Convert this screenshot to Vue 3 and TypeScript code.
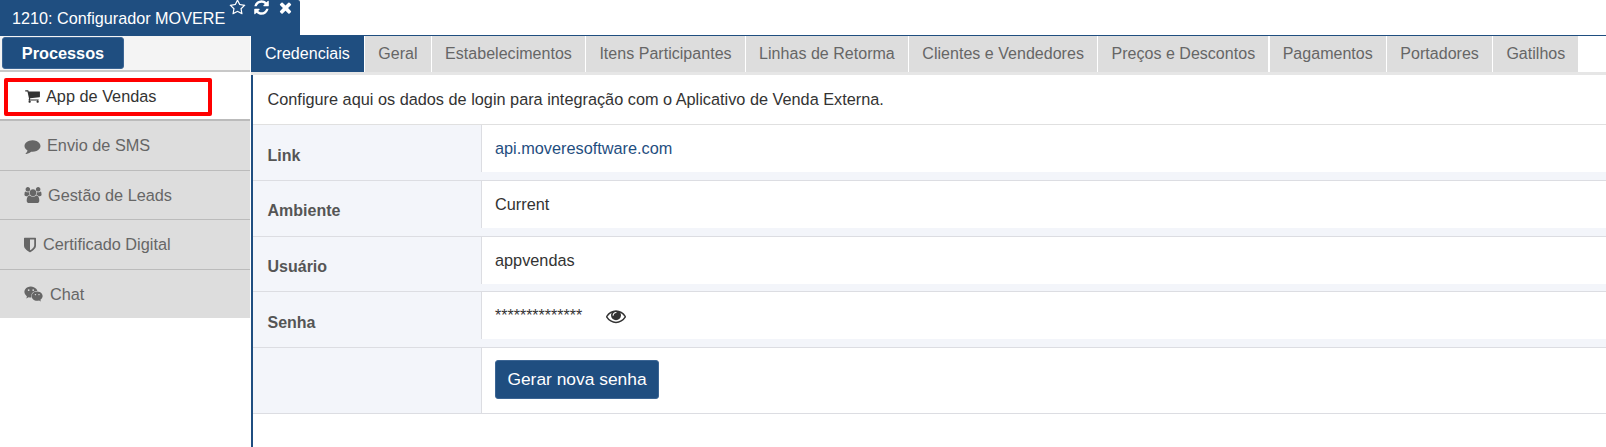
<script setup lang="ts">
const tabs = [
  'Credenciais',
  'Geral',
  'Estabelecimentos',
  'Itens Participantes',
  'Linhas de Retorma',
  'Clientes e Vendedores',
  'Preços e Descontos',
  'Pagamentos',
  'Portadores',
  'Gatilhos',
]

const icons: Record<string, { box: string; d: string }> = {
  comment: {
    box: '0 0 1792 1792',
    d: 'M1792 896q0 174-120 321.5t-326 233-450 85.5q-70 0-145-8-198 175-460 242-49 14-114 22-17 2-30.5-9t-17.5-29v-1q-3-4-.5-12t2-10 4.5-9.5l6-9 7-8.5 8-9q7-8 31-34.5t34.5-38 31-39.5 32.5-51 27-59 26-76q-157-89-247.5-220t-90.5-281q0-130 71-248.5t191-204.5 286-136.5 348-50.5q244 0 450 85.5t326 233 120 321.5z',
  },
  users: {
    box: '0 0 1920 1792',
    d: 'M593 896q-162 5-265 128h-134q-82 0-138-40.5t-56-118.5q0-353 124-353 6 0 43.5 21t97.5 42.5 119 21.5q67 0 133-23-5 37-5 66 0 139 81 256zm1071 637q0 120-73 189.5t-194 69.5h-874q-121 0-194-69.5t-73-189.5q0-53 3.5-103.5t14-109 26.5-108.5 43-97.5 62-81 85.5-53.5 111.5-20q10 0 43 21.5t73 48 107 48 135 21.5 135-21.5 107-48 73-48 43-21.5q61 0 111.5 20t85.5 53.5 62 81 43 97.5 26.5 108.5 14 109 3.5 103.5zm-1024-1277q0 106-75 181t-181 75-181-75-75-181 75-181 181-75 181 75 75 181zm704 384q0 159-112.5 271.5t-271.5 112.5-271.5-112.5-112.5-271.5 112.5-271.5 271.5-112.5 271.5 112.5 112.5 271.5zm576 225q0 78-56 118.5t-138 40.5h-134q-103-123-265-128 81-117 81-256 0-29-5-66 66 23 133 23 59 0 119-21.5t97.5-42.5 43.5-21q124 0 124 353zm-128-609q0 106-75 181t-181 75-181-75-75-181 75-181 181-75 181 75 75 181z',
  },
  shield: {
    box: '256 128 1280 1536',
    d: 'M1344 960v-640h-448v1137q119-63 213-137 235-184 235-360zm192-768v768q0 86-33.5 170.5t-83 150-118 127.5-126.5 103-121 77.5-89.5 49.5-42.5 20q-12 6-26 6t-26-6q-16-7-42.5-20t-89.5-49.5-121-77.5-126.5-103-118-127.5-83-150-33.5-170.5v-768q0-26 19-45t45-19h1152q26 0 45 19t19 45z',
  },
  wechat: {
    box: '0 0 2048 1792',
    d: 'M580 461q0-41-25-66t-66-25q-43 0-76 25.5t-33 65.5q0 39 33 64.5t76 25.5q41 0 66-24.5t25-65.5zm743 507q0-28-25.5-50t-65.5-22q-27 0-49.5 22.5t-22.5 49.5q0 28 22.5 50.5t49.5 22.5q40 0 65.5-22t25.5-51zm-236-507q0-41-24.5-66t-65.5-25q-43 0-76 25.5t-33 65.5q0 39 33 64.5t76 25.5q41 0 65.5-24.5t24.5-65.5zm635 507q0-28-26-50t-65-22q-27 0-49.5 22.5t-22.5 49.5q0 28 22.5 50.5t49.5 22.5q39 0 65-22t26-51zm-266-397q-31-4-70-4-169 0-311 77t-223.5 208.5-81.5 287.5q0 78 23 152-35 3-68 3-26 0-50-1.5t-55-6.5-44.5-7-54.5-10.5-50-10.5l-253 127 72-218q-290-203-290-490 0-169 97.5-311t264-223.5 363.5-81.5q176 0 332.5 66t262 182.5 136.5 260.5zm592 561q0 117-68.5 223.5t-185.5 193.5l55 181-199-109q-150 37-218 37-169 0-311-70.5t-223.5-191.5-81.5-264 81.5-264 223.5-191.5 311-70.5q161 0 303 70.5t227.5 191.5 85.5 264z',
  },
}

const menu = [
  { label: 'Envio de SMS', icon: 'comment', w: 17, gap: 6 },
  { label: 'Gestão de Leads', icon: 'users', w: 18, gap: 6 },
  { label: 'Certificado Digital', icon: 'shield', w: 12, gap: 7 },
  { label: 'Chat', icon: 'wechat', w: 19, gap: 7 },
]

const rows = [
  { label: 'Link', value: 'api.moveresoftware.com', link: true },
  { label: 'Ambiente', value: 'Current' },
  { label: 'Usuário', value: 'appvendas' },
]
</script>

<template>
  <div class="page">
    <header class="top">
      <div class="title">
        <span class="title-text">1210: Configurador MOVERE</span>
        <svg class="t-ico star" viewBox="0 0 1792 1792"><path d="M1201 1004l306-297-422-62-189-382-189 382-422 62 306 297-73 421 378-199 377 199zm527-357q0 22-26 48l-363 354 86 500q1 7 1 20 0 50-41 50-19 0-40-12l-449-236-449 236q-22 12-40 12-21 0-31.5-14.5t-10.5-35.5q0-6 2-20l86-500-364-354q-25-27-25-48 0-37 56-46l502-73 225-455q19-41 49-41t49 41l225 455 502 73q56 9 56 46z" /></svg>
        <svg class="t-ico" viewBox="0 0 1792 1792"><path d="M1639 1056q0 5-1 7-64 268-268 434.5t-478 166.5q-146 0-282.5-55t-243.5-157l-129 129q-19 19-45 19t-45-19-19-45v-448q0-26 19-45t45-19h448q26 0 45 19t19 45-19 45l-137 137q71 66 161 102t187 36q134 0 250-65t186-179q11-17 53-117 8-23 30-23h192q13 0 22.5 9.5t9.5 22.5zm25-800v448q0 26-19 45t-45 19h-448q-26 0-45-19t-19-45 19-45l138-138q-148-137-349-137-134 0-250 65t-186 179q-11 17-53 117-8 23-30 23h-199q-13 0-22.5-9.5t-9.5-22.5v-7q65-268 270-434.5t480-166.5q146 0 284 55.5t245 156.5l130-129q19-19 45-19t45 19 19 45z" /></svg>
        <svg class="t-ico" viewBox="0 0 1792 1792"><path d="M1490 1322q0 40-28 68l-136 136q-28 28-68 28t-68-28l-294-294-294 294q-28 28-68 28t-68-28l-136-136q-28-28-28-68t28-68l294-294-294-294q-28-28-28-68t28-68l136-136q28-28 68-28t68 28l294 294 294-294q28-28 68-28t68 28l136 136q28 28 28 68t-28 68l-294 294 294 294q28 28 28 68z" /></svg>
      </div>
    </header>

    <div class="body">
      <aside class="side">
        <div class="side-bar">
          <button class="proc">Processos</button>
        </div>
        <div class="item active">
          <svg class="m-ico cart" viewBox="0 0 1792 1792"><path d="M704 1536q0 52-38 90t-90 38-90-38-38-90 38-90 90-38 90 38 38 90zm896 0q0 52-38 90t-90 38-90-38-38-90 38-90 90-38 90 38 38 90zm128-1088v512q0 24-16.5 42.5t-40.5 21.5l-1044 122q13 60 13 70 0 16-24 64h920q26 0 45 19t19 45-19 45-45 19h-1024q-26 0-45-19t-19-45q0-11 8-31.5t16-36 21.5-40 15.5-29.5l-177-823h-204q-26 0-45-19t-19-45 19-45 45-19h256q16 0 28.5 6.5t19.5 15.5 13 24.5 8 26 5.5 29.5 4.5 26h1201q26 0 45 19t19 45z" /></svg>
          <span>App de Vendas</span>
          <div class="mark"></div>
        </div>
        <div v-for="m in menu" :key="m.label" class="item">
          <svg
            class="m-ico"
            :viewBox="icons[m.icon].box"
            :style="{ width: m.w + 'px', marginRight: m.gap + 'px' }"
          >
            <path :d="icons[m.icon].d" />
          </svg>
          <span>{{ m.label }}</span>
        </div>
      </aside>

      <main class="main">
        <nav class="tabs">
          <div v-for="(t, i) in tabs" :key="t" class="tab" :class="{ on: i === 0 }">{{ t }}</div>
        </nav>
        <div class="panel">
          <p class="intro">Configure aqui os dados de login para integração com o Aplicativo de Venda Externa.</p>
          <div v-for="r in rows" :key="r.label" class="row">
            <div class="lbl">{{ r.label }}</div>
            <div class="val" :class="{ link: r.link }">{{ r.value }}</div>
          </div>
          <div class="row">
            <div class="lbl">Senha</div>
            <div class="val pass">
              <span class="stars">**************</span>
              <svg class="eye" viewBox="0 0 1792 1792"><path d="M1664 960q-152-236-381-353 61 104 61 225 0 185-131.5 316.5t-316.5 131.5-316.5-131.5-131.5-316.5q0-121 61-225-229 117-381 353 133 205 333.5 326.5t434.5 121.5 434.5-121.5 333.5-326.5zm-720-384q0-20-14-34t-34-14q-125 0-214.5 89.5t-89.5 214.5q0 20 14 34t34 14 34-14 14-34q0-86 61-147t147-61q20 0 34-14t14-34zm848 384q0 34-20 69-140 230-376.5 368.5t-499.5 138.5-499.5-139-376.5-368q-20-35-20-69t20-69q140-229 376.5-368t499.5-139 499.5 139 376.5 368q20 35 20 69z" /></svg>
            </div>
          </div>
          <div class="row last">
            <div class="lbl"></div>
            <div class="val"><button class="gen">Gerar nova senha</button></div>
          </div>
        </div>
      </main>
    </div>
  </div>
</template>

<style>
html,
body {
  background: #fff;
  overflow: hidden;
}
</style>

<style scoped>
.page {
  width: 1606px;
  height: 447px;
  display: flex;
  flex-direction: column;
  font-family: 'Liberation Sans', Arial, sans-serif;
  font-size: 16.3px;
  color: #333;
  overflow: hidden;
}

.top {
  height: 36px;
  flex: none;
  border-bottom: 1px solid #1f4e80;
  box-sizing: border-box;
}
.title {
  width: 300px;
  height: 36px;
  background: #1f4e80;
  color: #fff;
  display: flex;
  align-items: flex-start;
  padding-left: 12px;
  box-sizing: border-box;
  border-top-right-radius: 2px;
}
.title-text {
  font-size: 16.2px;
  line-height: 36px;
  margin-right: 4px;
  white-space: nowrap;
  flex: none;
}
.t-ico {
  width: 17px;
  height: 17px;
  flex: none;
  fill: #fff;
  margin-right: 7px;
  margin-top: -1px;
}

.body {
  flex: 1;
  display: flex;
  min-height: 0;
}
.side {
  width: 251px;
  flex: none;
  padding-right: 1px;
  box-sizing: border-box;
}
.side-bar {
  height: 36px;
  background: #f4f4f4;
  border-bottom: 2px solid #c8c8c8;
  box-sizing: border-box;
  padding: 1px 2px;
}
.proc {
  display: block;
  width: 122px;
  height: 32px;
  padding: 0;
  background: #1f4e80;
  border: 1px solid #3b6594;
  border-radius: 3px;
  color: #fff;
  font: bold 16.3px 'Liberation Sans', Arial, sans-serif;
}
.item {
  position: relative;
  height: 49.5px;
  display: flex;
  align-items: center;
  padding-left: 24px;
  padding-top: 1px;
  box-sizing: border-box;
  background: #ddd;
  color: #666;
  border-bottom: 1px solid #bbb;
}
.item:last-child {
  height: 48px;
  border-bottom: 0;
}
.item.active {
  height: 49px;
  background: #fff;
  color: #333;
  border-bottom: 2px solid #bbb;
}
.m-ico {
  height: 16px;
  flex: none;
  fill: #666;
}
.cart {
  width: 17px;
  margin-right: 5px;
  fill: #333;
}
.mark {
  position: absolute;
  left: 4px;
  top: 6px;
  width: 208px;
  height: 38px;
  box-sizing: border-box;
  border: 4px solid #f00;
  border-radius: 2px;
}

.main {
  flex: 1;
  min-width: 0;
  border-left: 2px solid #1f4e80;
}
.tabs {
  height: 39px;
  display: flex;
  gap: 1.5px;
  margin-left: -2px;
  border-bottom: 3px solid #e6e6e6;
  box-sizing: border-box;
}
.tab {
  background: #ddd;
  color: #666;
  font-size: 16px;
  letter-spacing: 0.03px;
  line-height: 35px;
  padding: 0 13px;
  white-space: nowrap;
}
.tab.on {
  background: #1f4e80;
  color: #fff;
  padding: 0 14px;
}
.panel {
  background: #fff;
}
.intro {
  margin: 0;
  height: 50px;
  padding-left: 14.5px;
  line-height: 49px;
  box-sizing: border-box;
  border-bottom: 1px solid #e0e0e0;
  color: #333;
}
.row {
  height: 55.75px;
  display: flex;
  align-items: flex-start;
  background: #f3f5fa;
  border-bottom: 1px solid #dcdde2;
  box-sizing: border-box;
}
.row.last {
  height: 66px;
  align-items: stretch;
}
.lbl {
  width: 228px;
  flex: none;
  padding: 5.5px 0 0 14.5px;
  box-sizing: border-box;
  line-height: 49px;
  font-size: 16px;
  font-weight: bold;
  color: #555;
}
.val {
  flex: 1;
  height: 47px;
  display: flex;
  align-items: center;
  padding-left: 13px;
  background: #fff;
  border-left: 1px solid #dcdde2;
  color: #333;
}
.last .val {
  height: auto;
  align-items: center;
  padding-bottom: 2px;
}
.link {
  color: #1f4e80;
}
.stars {
  width: 111px;
  flex: none;
  font-size: 16px;
}
.eye {
  width: 20px;
  height: 20px;
  fill: #333;
}
.gen {
  width: 164px;
  height: 39px;
  padding: 0;
  background: #1f4e80;
  border: 1px solid #3b6594;
  border-radius: 3px;
  color: #fff;
  font: 17.4px 'Liberation Sans', Arial, sans-serif;
}
</style>
